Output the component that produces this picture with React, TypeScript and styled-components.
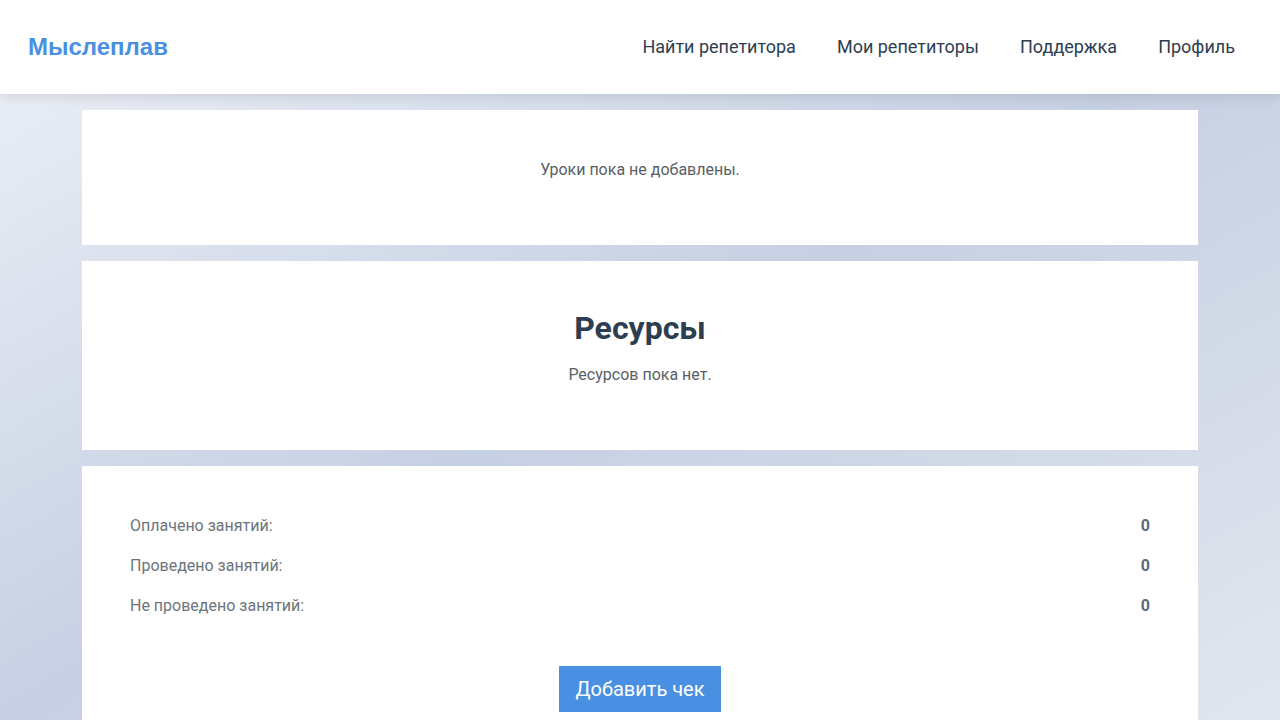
import React from "react";
import styled, { createGlobalStyle } from "styled-components";

const Global = createGlobalStyle`
  html, body { margin: 0; padding: 0; }
  body {
    font-family: Roboto, "Noto Sans", sans-serif;
    min-height: 100vh;
    background: linear-gradient(to bottom right, #eef1f7 0%, #c6d0e3 50%, #e2e6ee 100%) fixed;
  }
  * { box-sizing: border-box; }
`;

const Header = styled.header`
  height: 94px;
  background: #fff;
  display: flex;
  align-items: center;
  justify-content: space-between;
  padding: 0 45px 0 28px;
  box-shadow: 0 2px 12px rgba(0, 0, 0, 0.12);
  position: relative;
  z-index: 1;
`;

const Logo = styled.div`
  font-family: "Liberation Sans", Arial, sans-serif;
  font-weight: 700;
  font-size: 24px;
  color: #4a90e2;
`;

const Nav = styled.nav`
  display: flex;
  gap: 41px;
  padding-bottom: 2px;
`;

const NavLink = styled.a`
  font-size: 18px;
  color: #2c3e50;
  text-decoration: none;
`;

const Main = styled.main`
  max-width: 1116px;
  margin: 0 auto;
  padding-top: 16px;
  display: flex;
  flex-direction: column;
  gap: 16px;
`;

const Card = styled.section<{ $pad: string }>`
  background: #fff;
  padding: ${(p) => p.$pad};
  text-align: center;
`;

const Empty = styled.p`
  margin: 0;
  font-size: 16px;
  line-height: 24px;
  color: #595f66;
`;

const Title = styled.h2`
  margin: 0 0 16px;
  font-size: 32px;
  line-height: 38px;
  font-weight: 700;
  color: #2c3e50;
`;

const Stats = styled.div`
  display: flex;
  flex-direction: column;
  gap: 16px;
  text-align: left;
`;

const StatRow = styled.div`
  display: flex;
  justify-content: space-between;
  font-size: 16px;
  line-height: 24px;
`;

const StatLabel = styled.span`
  color: #6c757d;
`;

const StatValue = styled.span`
  color: #5c6b7a;
  font-weight: 700;
`;

const Button = styled.button`
  margin-top: 48px;
  height: 46px;
  padding: 0 16px;
  border: none;
  background: #4a90e2;
  color: #fff;
  font-family: Roboto, sans-serif;
  font-size: 20px;
  cursor: pointer;
`;

const stats = [
  ["Оплачено занятий:", "0"],
  ["Проведено занятий:", "0"],
  ["Не проведено занятий:", "0"],
];

export default function App() {
  return (
    <>
      <Global />
      <Header>
        <Logo>Мыслеплав</Logo>
        <Nav>
          <NavLink href="#">Найти репетитора</NavLink>
          <NavLink href="#">Мои репетиторы</NavLink>
          <NavLink href="#">Поддержка</NavLink>
          <NavLink href="#">Профиль</NavLink>
        </Nav>
      </Header>
      <Main>
        <Card $pad="48px 48px 63px">
          <Empty>Уроки пока не добавлены.</Empty>
        </Card>
        <Card $pad="48px 48px 63px">
          <Title>Ресурсы</Title>
          <Empty>Ресурсов пока нет.</Empty>
        </Card>
        <Card $pad="48px 48px 48px">
          <Stats>
            {stats.map(([l, v]) => (
              <StatRow key={l}>
                <StatLabel>{l}</StatLabel>
                <StatValue>{v}</StatValue>
              </StatRow>
            ))}
          </Stats>
          <Button>Добавить чек</Button>
        </Card>
      </Main>
    </>
  );
}
